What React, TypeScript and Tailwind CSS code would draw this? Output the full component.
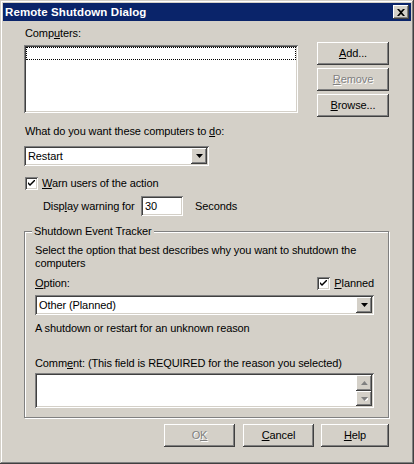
import React from "react";

const raised =
  "shadow-[inset_-1px_-1px_#404040,inset_1px_1px_#ffffff,inset_-2px_-2px_#808080,inset_2px_2px_#d4d0c8]";
const sunken =
  "shadow-[inset_1px_1px_#808080,inset_-1px_-1px_#ffffff,inset_2px_2px_#404040,inset_-2px_-2px_#d4d0c8]";

function Btn({
  w,
  disabled,
  children,
}: {
  w: string;
  disabled?: boolean;
  children: React.ReactNode;
}) {
  return (
    <div
      className={`${raised} ${w} bg-[#d4d0c8] h-[23px] flex items-center justify-center ${
        disabled ? "text-[#808080] [text-shadow:1px_1px_#ffffff]" : "text-black"
      }`}
    >
      {children}
    </div>
  );
}

function Arrow({ down = true, gray = false }: { down?: boolean; gray?: boolean }) {
  const fill = gray ? "#808080" : "#000000";
  return (
    <svg width="7" height="4" viewBox="0 0 7 4" className="block">
      {gray && (
        <path
          d={down ? "M1 1 H8 L4.5 5 Z" : "M4.5 1 L8 5 H1 Z"}
          fill="#ffffff"
        />
      )}
      <path d={down ? "M0 0 H7 L3.5 4 Z" : "M3.5 0 L7 4 H0 Z"} fill={fill} />
    </svg>
  );
}

function Check() {
  return (
    <div className={`${sunken} w-[13px] h-[13px] bg-white flex items-center justify-center shrink-0`}>
      <svg width="7" height="7" viewBox="0 0 7 7" className="block">
        <path d="M0 2 V4 L2 6 L7 1 V-1 L2 4 Z" fill="#000000" />
      </svg>
    </div>
  );
}

function Select({ w, text }: { w: string; text: string }) {
  return (
    <div className={`${sunken} ${w} h-[20px] bg-white flex items-center p-[2px]`}>
      <span className="flex-1 pl-[2px]">{text}</span>
      <div className={`${raised} bg-[#d4d0c8] w-[16px] h-[16px] flex items-center justify-center`}>
        <Arrow />
      </div>
    </div>
  );
}

export default function App() {
  return (
    <div
      className={`w-[414px] h-[464px] bg-[#d4d0c8] flex flex-col shadow-[inset_-1px_-1px_#404040,inset_1px_1px_#d4d0c8,inset_-2px_-2px_#808080,inset_2px_2px_#ffffff] font-['Liberation_Sans',Arial,sans-serif] text-[11px] leading-[13px] tracking-[-0.1px] text-black`}
    >
      {/* Title bar */}
      <div className="mx-[3px] mt-[3px] h-[18px] bg-[#0a246a] flex items-center pl-[2px] pr-[2px]">
        <span className="flex-1 text-white font-bold text-[11.5px] tracking-[0.1px]">Remote Shutdown Dialog</span>
        <div className={`${raised} bg-[#d4d0c8] w-[16px] h-[14px] flex items-center justify-center`}>
          <svg width="8" height="7" viewBox="0 0 8 7" className="block">
            <path d="M0 0 H2 L4 2 L6 0 H8 L5 3.5 L8 7 H6 L4 5 L2 7 H0 L3 3.5 Z" fill="#000000" />
          </svg>
        </div>
      </div>

      <div className="pl-[24px] flex flex-col">
        {/* Computers row */}
        <div className="flex items-start">
          <div className="w-[274px] pt-[6px] flex flex-col">
            <div className="pl-[1px] h-[13px]">
              Comp<u>u</u>ters:
            </div>
            <div className={`${sunken} mt-[5px] h-[68px] bg-white p-[2px]`}>
              <div className="h-[13px] border border-dotted border-black" />
            </div>
          </div>
          <div className="ml-[19px] pt-[21px] flex flex-col gap-[3px]">
            <Btn w="w-[72px]">
              <span>
                <u>A</u>dd...
              </span>
            </Btn>
            <Btn w="w-[72px]" disabled>
              <span>
                <u>R</u>emove
              </span>
            </Btn>
            <Btn w="w-[72px]">
              <span>
                <u>B</u>rowse...
              </span>
            </Btn>
          </div>
        </div>

        <div className="mt-[8px] pl-[1px] h-[13px]">
          What do you want these computers to <u>d</u>o:
        </div>
        <div className="mt-[8px]">
          <Select w="w-[185px]" text="Restart" />
        </div>

        <div className="mt-[11px] h-[13px] flex items-center pl-[1px]">
          <Check />
          <span className="ml-[4px]">
            <u>W</u>arn users of the action
          </span>
        </div>

        <div className="mt-[6px] h-[20px] flex items-center pl-[19px]">
          <span className="w-[98px]">
            Disp<u>l</u>ay warning for
          </span>
          <div className={`${sunken} w-[42px] h-[20px] bg-white flex items-center pl-[4px]`}>30</div>
          <span className="ml-[12px]">Seconds</span>
        </div>

        {/* Group box */}
        <div className="mt-[15px] w-[365px] relative border border-[#808080] shadow-[inset_1px_1px_#ffffff,1px_1px_#ffffff] pl-[10px] pr-[14px] pt-[12px] pb-[9px] flex flex-col">
          <span className="absolute top-[-7px] left-[7px] px-[2px] bg-[#d4d0c8]">Shutdown Event Tracker</span>
          <div className="h-[26px]">
            Select the option that best describes why you want to shutdown the computers
          </div>
          <div className="mt-[7px] h-[13px] flex items-center justify-between">
            <span>
              <u>O</u>ption:
            </span>
            <div className="flex items-center">
              <Check />
              <span className="ml-[4px]">
                <u>P</u>lanned
              </span>
            </div>
          </div>
          <div className="mt-[5px]">
            <Select w="w-full" text="Other (Planned)" />
          </div>
          <div className="mt-[7px] h-[13px]">A shutdown or restart for an unknown reason</div>
          <div className="mt-[22px] h-[13px]">
            Comm<u>e</u>nt: (This field is REQUIRED for the reason you selected)
          </div>
          <div className={`${sunken} mt-[3px] h-[35px] bg-white p-[2px] flex justify-end`}>
            <div className="w-[16px] flex flex-col">
              <div className={`${raised} bg-[#d4d0c8] h-[16px] flex items-center justify-center`}>
                <Arrow down={false} gray />
              </div>
              <div className={`${raised} bg-[#d4d0c8] h-[15px] flex items-center justify-center`}>
                <Arrow gray />
              </div>
            </div>
          </div>
        </div>

        {/* Bottom buttons */}
        <div className="mt-[6px] flex pl-[140px]">
          <Btn w="w-[71px]" disabled>
            <span>
              O<u>K</u>
            </span>
          </Btn>
          <div className="ml-[8px]">
            <Btn w="w-[71px]">
              <span>
                <u>C</u>ancel
              </span>
            </Btn>
          </div>
          <div className="ml-[7px]">
            <Btn w="w-[68px]">
              <span>
                <u>H</u>elp
              </span>
            </Btn>
          </div>
        </div>
      </div>
    </div>
  );
}
